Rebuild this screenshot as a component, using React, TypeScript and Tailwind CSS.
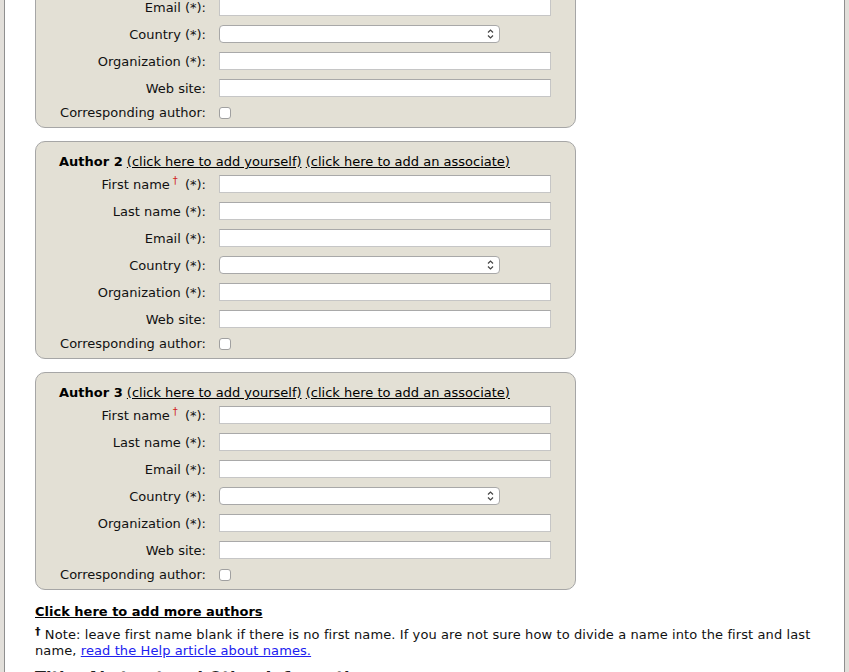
import React from "react";

const font = { fontFamily: '"DejaVu Sans", Verdana, sans-serif' };

function TextRow({ label, dagger }: { label: string; dagger?: boolean }) {
  return (
    <div className="flex items-center h-[18px]">
      <div className="w-[170px] text-right text-[13px] leading-[16px] text-[#111] pt-[1px]">
        {dagger ? (
          <>
            First name
            <span className="relative -top-[5px] ml-[3px] mr-[3px] text-[#d0231c] text-[10px] leading-[10px]">†</span>{" "}
            (*):
          </>
        ) : (
          label
        )}
      </div>
      <input
        type="text"
        className="ml-[13px] w-[332px] h-[18px] bg-white border border-[#c6c6c6] border-t-[#a9a9a9] outline-none"
      />
    </div>
  );
}

function SelectRow() {
  return (
    <div className="flex items-center h-[18px]">
      <div className="w-[170px] text-right text-[13px] leading-[16px] text-[#111] pt-[1px]">Country (*):</div>
      <div className="ml-[13px] w-[281px] h-[18px] bg-white border border-[#a8a8a8] rounded-[4px] flex items-center justify-end pr-[5px]">
        <svg width="7" height="10" viewBox="0 0 7 10">
          <path d="M1 3.5 L3.5 1 L6 3.5" fill="none" stroke="#444" strokeWidth="1.2" />
          <path d="M1 6.5 L3.5 9 L6 6.5" fill="none" stroke="#444" strokeWidth="1.2" />
        </svg>
      </div>
    </div>
  );
}

function AuthorPanel({ n }: { n: number }) {
  return (
    <div className="w-[541px] border border-[#a6a6a6] rounded-[10px] bg-[#e3e0d5] pt-[12px] pb-[8px]">
      <div className="pl-[23px] h-[16px] text-[13px] leading-[16px] text-black whitespace-nowrap">
        <span className="font-bold">Author {n}</span>{" "}
        <span className="underline">(click here to add yourself)</span>{" "}
        <span className="underline">(click here to add an associate)</span>
      </div>
      <div className="mt-[5px] flex flex-col gap-[9px]">
        <TextRow label="" dagger />
        <TextRow label="Last name (*):" />
        <TextRow label="Email (*):" />
        <SelectRow />
        <TextRow label="Organization (*):" />
        <TextRow label="Web site:" />
      </div>
      <div className="mt-[10px] flex items-center h-[12px]">
        <div className="w-[170px] text-right text-[13px] leading-[16px] text-[#111]">Corresponding author:</div>
        <div className="ml-[13px] w-[12px] h-[12px] bg-white border border-[#a0a0a0] rounded-[3px]" />
      </div>
    </div>
  );
}

export default function App() {
  return (
    <div className="w-[849px] h-[672px] overflow-hidden bg-[#e2dfda]" style={font}>
      <div className="ml-[4px] w-[841px] h-[672px] bg-white border-l border-r border-[#8f8f8f] overflow-hidden">
        <div className="pl-[30px] pr-[29px] -mt-[90px]">
          <div className="flex flex-col gap-[13px]">
            <AuthorPanel n={1} />
            <AuthorPanel n={2} />
            <AuthorPanel n={3} />
          </div>
          <div className="mt-[13px] text-[13px] leading-[18px] font-bold underline text-black">
            Click here to add more authors
          </div>
          <div className="mt-[6px] text-[13px] leading-[16px] text-[#111] tracking-[0.1px]">
            <span className="relative -top-[4px] font-bold text-[11px] leading-[10px]">†</span> Note: leave first name blank if there is no first name. If you are not sure how to divide a name into the first and last name,{" "}
            <span className="text-[#2020f0] underline">read the Help article about names.</span>
          </div>
          <div className="mt-[9px] text-[16px] leading-[20px] font-bold text-[#222]">
            Title, Abstract and Other Information
          </div>
        </div>
      </div>
    </div>
  );
}
